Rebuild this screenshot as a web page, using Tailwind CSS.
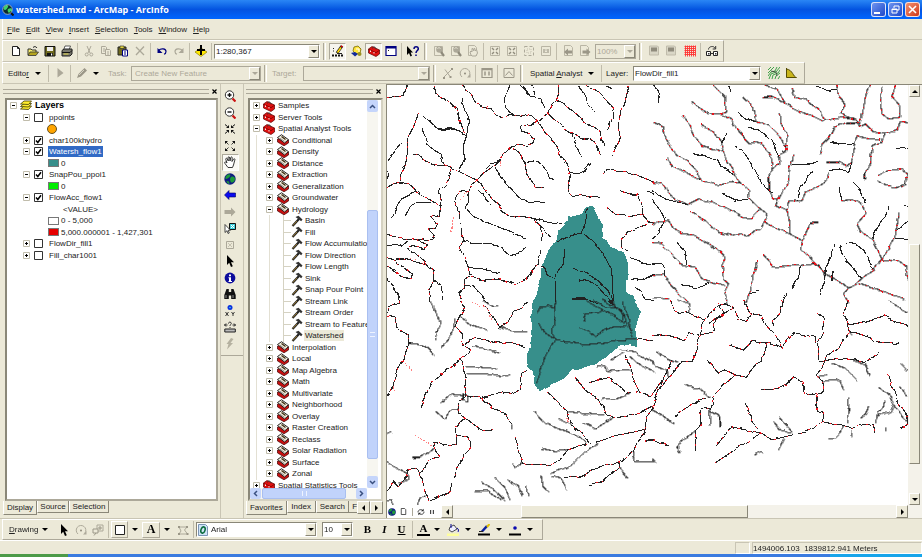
<!DOCTYPE html>
<html lang="en">
<head>
    <meta charset="UTF-8">
    <meta name="viewport" content="width=device-width, initial-scale=1.0">
    <title>watershed.mxd - ArcMap - ArcInfo</title>
    <script src="https://cdn.jsdelivr.net/npm/@tailwindcss/browser@4"></script>
</head>
<body class="h-screen flex flex-col overflow-hidden bg-[#ece9d8] font-['Liberation_Sans',sans-serif] text-[8px] leading-[11px] text-[#222]">

    <!-- Icon set, 12 x 12 grid -->
    <svg class="hidden">
        <symbol id="new" viewBox="0 0 12 12"><path d="M2.500 1.500h5l2 2v7h-7z" fill="#fff" stroke="#222"/><path d="M7.500 1.500v2h2" fill="none" stroke="#222"/></symbol>
        <symbol id="open" viewBox="0 0 12 12"><path d="M1 10V4h3l1 1h4v2" fill="#f5ec6a" stroke="#333"/><path d="M1 10.500 3 7h8.500L9 10.500z" fill="#b5a51d" stroke="#333" stroke-width=".8"/><path d="M6 2.500c1.500-1.500 3-1 4 .5" fill="none" stroke="#222"/></symbol>
        <symbol id="save" viewBox="0 0 12 12"><path d="M1 1.500h10V11H1z" fill="#6f6a1e" stroke="#111"/><path d="M3 2h6v4H3z" fill="#eee"/><path d="M3 8h6v3H3z" fill="#111"/><path d="M7 8.500h1.200v2H7z" fill="#fff"/></symbol>
        <symbol id="print" viewBox="0 0 12 12"><path d="M4 1h5.500L8 5H2.500z" fill="#fff" stroke="#333" stroke-width=".8"/><path d="M1 5.500 3 4h8v5l-2 2H1z" fill="#77766c" stroke="#222"/><path d="M1 7.500h8M9 7.500l2-2" stroke="#111"/><path d="M2.500 9h5" stroke="#e5d94a"/></symbol>
        <symbol id="cut" viewBox="0 0 12 12"><g fill="none" stroke="#aca899"><path d="M4 1l3 7M8 1 5 8"/><circle cx="3.700" cy="9.500" r="1.500"/><circle cx="8.300" cy="9.500" r="1.500"/></g></symbol>
        <symbol id="copy" viewBox="0 0 12 12"><g fill="#ece9d8" stroke="#aca899"><path d="M1.500 1.500h4l1 1v6h-5z"/><path d="M5.500 4.500h4l1 1v5h-5z"/><path d="M3 4h2M3 6h2M7 7h2M7 9h2"/></g></symbol>
        <symbol id="paste" viewBox="0 0 12 12"><path d="M1 2h8v8H1z" fill="#6f6a1e" stroke="#222"/><path d="M3 1h4v2.500H3z" fill="#ddd040" stroke="#222" stroke-width=".6"/><path d="M5.500 5h5v6h-5z" fill="#fff" stroke="#000080"/><path d="M7 7h2M7 9h2" stroke="#000080"/></symbol>
        <symbol id="del" viewBox="0 0 12 12"><path d="M2 2l8 8M10 1.500 2 10" stroke="#aca899" stroke-width="1.300"/></symbol>
        <symbol id="undo" viewBox="0 0 12 12"><path d="M2.500 5.500C5 3 10 3.500 10 6.500c0 1.500-1 2.500-2 2.800" fill="none" stroke="#000080" stroke-width="1.200"/><path d="M1.500 3v5h5z" fill="#000080"/></symbol>
        <symbol id="redo" viewBox="0 0 12 12"><path d="M9.500 5.500C7 3 2 3.500 2 6.500c0 1.500 1 2.500 2 2.800" fill="none" stroke="#aca899" stroke-width="1.200"/><path d="M10.500 3v5h-5z" fill="#aca899"/></symbol>
        <symbol id="adddata" viewBox="0 0 12 12"><path d="M0 7l6-4 6 4-6 4.500z" fill="#ffe800" stroke="#8a7b00" stroke-width=".7"/><path d="M6 0v10M2 5h8" stroke="#000" stroke-width="2"/></symbol>
        <symbol id="edit" viewBox="0 0 12 12"><path d="M1 3.500h1M1 6h1M5 8.500h5" stroke="#222"/><path d="M0 10.500h11" stroke="#111" stroke-width="2" stroke-dasharray="2 1"/><path d="M5 8l5-7" stroke="#222" stroke-width="3"/><path d="M5.500 7.500 9 2.500" stroke="#ffd800" stroke-width="1.600"/><path d="M9.300 2l.9-1.200" stroke="#d00" stroke-width="2"/></symbol>
        <symbol id="catalog" viewBox="0 0 12 12"><path d="M3 2l4-1 3 3-1 4-4 1-3-3z" fill="#ffe53a" stroke="#776a00" stroke-width=".8"/><path d="M5 4h3v3" fill="none" stroke="#fff"/><path d="M0 8l4-1 3 2-3 2.500z" fill="#112a9a"/><circle cx="8.500" cy="9" r="2" fill="#999020"/></symbol>
        <symbol id="toolbox" viewBox="0 0 12 12"><path d="M.5 4 4 1.500 11.500 5v4L8 11.500.5 8z" fill="#e01010" stroke="#5a0000" stroke-width=".7"/><path d="M.5 4.200 8 7.700l3.500-2.500" fill="none" stroke="#7a0000" stroke-width=".8"/><path d="M4.500 3.500c0-2.500 3.500-2 3.500.8" fill="none" stroke="#333" stroke-width=".8"/><path d="M2.500 5.500v1.500M6 7v1.500" stroke="#fff" stroke-width=".9"/></symbol>
        <symbol id="cmd" viewBox="0 0 12 12"><path d="M1 1.500h10v9H1z" fill="#fff" stroke="#000080" stroke-width="1.200"/><path d="M1 2.500h10" stroke="#000080" stroke-width="2"/><path d="M3 5.500h1" stroke="#222"/></symbol>
        <symbol id="help" viewBox="0 0 12 12"><path d="M0 1v9l2-2 1.500 3.500 1.500-.7L3.600 7.500H6z" fill="#000"/><path d="M7 4c0-3 4.300-2.700 4.300-.3C11.300 5.500 9 5.500 9 8M9 9.500v1.500" fill="none" stroke="#000080" stroke-width="1.500"/></symbol>
        <symbol id="pzin" viewBox="0 0 12 12"><path d="M1.500 1.500h8v9h-8z" fill="none" stroke="#b9b5a4"/><circle cx="6.500" cy="4.500" r="3.300" fill="#aca899"/><path d="M8 7l3 4" stroke="#8f8b7c" stroke-width="2.200"/><path d="M4.500 3.500c1-1 2-1 3 0" fill="none" stroke="#ece9d8"/></symbol>
        <symbol id="ppan" viewBox="0 0 12 12"><path d="M1.500.5h6l2 2v8h-8z" fill="none" stroke="#b9b5a4"/><path d="M4 10 3 7l1-1 1 1V3.500l1 .2.500 2 .5-2.200 1 .2V6l1.500-1.500L10.500 8 9 11H5z" fill="#ece9d8" stroke="#aca899"/></symbol>
        <symbol id="pfix" viewBox="0 0 12 12"><path d="M1.500 1.500h9v9h-9z" fill="none" stroke="#b9b5a4"/><path d="M3 3l2 2M9 3 7 5M3 9l2-2M9 9 7 7" stroke="#8f8b7c" stroke-width="1.400"/></symbol>
        <symbol id="pfull" viewBox="0 0 12 12"><path d="M1.500 1.500h9v9h-9z" fill="none" stroke="#aca899" stroke-dasharray="3 2"/><path d="M4 4h4v4H4z" fill="none" stroke="#c5c1b0" stroke-dasharray="1 1"/></symbol>
        <symbol id="p11" viewBox="0 0 12 12"><path d="M1.500 1.500h9v9h-9z" fill="none" stroke="#b9b5a4"/><path d="M4 4v4M8 4v4M6 4.500v1M6 7v1" stroke="#8f8b7c"/></symbol>
        <symbol id="pback" viewBox="0 0 12 12"><path d="M2.500.5h6l2 2v8h-8z" fill="none" stroke="#b9b5a4"/><path d="M2 7l4-3.500V5.500h4v3H6v2z" fill="#9b9788"/></symbol>
        <symbol id="pfwd" viewBox="0 0 12 12"><path d="M1.500.5h6l2 2v8h-8z" fill="none" stroke="#b9b5a4"/><path d="M11.500 7l-4-3.500V5.500h-4v3h4v2z" fill="#9b9788"/></symbol>
        <symbol id="draft" viewBox="0 0 12 12"><path d="M1.500 1h8l1 1v8h-9z" fill="#d9d6c6" stroke="#c0bcab"/><path d="M3 2.500h6v4H3z" fill="#8f8b7c"/></symbol>
        <symbol id="grid" viewBox="0 0 12 12"><path d="M1.500.5v11M3.500.5v11M5.500.5v11M7.500.5v11M9.500.5v11M11.500.5v11M.5 1.500h11M.5 3.500h11M.5 5.500h11M.5 7.500h11M.5 9.500h11" stroke="#f33" stroke-width=".9"/></symbol>
        <symbol id="link" viewBox="0 0 12 12"><path d="M.5 6.500h4v4h-4zM7.500 6.500h4v4h-4z" fill="#fff" stroke="#222"/><path d="M2 8h1.500v1.500H2zM9 8h1.500v1.500H9z" fill="#333"/><path d="M4.500 8.500h3" stroke="#333"/><path d="M2.500 4.500c0-3.500 6-4 6.500-1M9.700 1v3h-3" fill="none" stroke="#333"/></symbol>
        <symbol id="gptr" viewBox="0 0 12 12"><path d="M3.500 1v9.500L9.500 6z" fill="#aca899"/></symbol>
        <symbol id="gpen" viewBox="0 0 12 12"><path d="M1 11l1.500-4 6-6L11 3.500l-6 6z" fill="#9b9788"/><path d="M3 8l5-5" stroke="#d5d2c2"/></symbol>
        <symbol id="gline" viewBox="0 0 12 12"><path d="M1 11 11 1M3 2.500l5 7" stroke="#aca899"/><path d="M1 10h2v2H1zM9 1h2v2H9zM7.500 9h2v2h-2z" fill="#9b9788"/></symbol>
        <symbol id="grot" viewBox="0 0 12 12"><path d="M3 10A4.800 4.800 0 1 1 10 9" fill="none" stroke="#aca899"/><path d="M11.500 7v3.500H8z" fill="#aca899"/><circle cx="6" cy="6.500" r="1" fill="#8f8b7c"/></symbol>
        <symbol id="gtab" viewBox="0 0 12 12"><path d="M1 1.500h10v9H1z" fill="none" stroke="#9b9788" stroke-width="1.200"/><path d="M1 2.500h10M4 4.500v4M8 4.500v4" stroke="#9b9788" stroke-width="1.500"/></symbol>
        <symbol id="gsk" viewBox="0 0 12 12"><path d="M1 1.500h10v9H1z" fill="none" stroke="#9b9788"/><path d="M2.500 8.500 6 4.500l3.500 4" fill="none" stroke="#9b9788"/></symbol>
        <symbol id="contour" viewBox="0 0 12 12"><path d="M0 3 3 0M0 6 6 0M0 9l3-4 4-1 2-4M1 12l2-5 5-2 4-5M4 12l1-4 5-2 2-3M7 12l1-3 4-3M10 12l2-3" fill="none" stroke="#2d9a3a" stroke-width=".9"/><path d="M3 4l5 1 1 4" fill="none" stroke="#333" stroke-width=".7"/></symbol>
        <symbol id="hist" viewBox="0 0 12 12"><path d="M1.500 1v9.500h10C8 10 8 3 1.500 2z" fill="#c9b51c" stroke="#554c00"/></symbol>
        <symbol id="zin" viewBox="0 0 12 12"><circle cx="5.500" cy="5" r="4.200" fill="#fff" stroke="#333"/><path d="M5.500 3v4M3.500 5h4" stroke="#111" stroke-width="1.400"/><path d="M8.500 8.500l3 3" stroke="#c11" stroke-width="2.200"/></symbol>
        <symbol id="zout" viewBox="0 0 12 12"><circle cx="5.500" cy="5" r="4.200" fill="#fff" stroke="#333"/><path d="M3.500 5h4" stroke="#111" stroke-width="1.400"/><path d="M8.500 8.500l3 3" stroke="#c11" stroke-width="2.200"/></symbol>
        <symbol id="fin" viewBox="0 0 12 12"><path d="M1 1.500l2.500 2M11 1.500 8.500 3.500M1 10.500l2.500-2M11 10.500 8.500 8.500" stroke="#111"/><path d="M5 2v3H2zM7 2v3h3zM5 10V7H2zM7 10V7h3z" fill="#111"/></symbol>
        <symbol id="fout" viewBox="0 0 12 12"><path d="M4.500 4.500 2 2M7.500 4.500 10 2M4.500 7.500 2 10M7.500 7.500 10 10" stroke="#111" stroke-width=".8"/><path d="M1 1h3L1 4zM11 1H8l3 3zM1 11h3L1 8zM11 11H8l3-3z" fill="#111"/></symbol>
        <symbol id="pan" viewBox="0 0 12 12"><path d="M4 11.500 1 7.500C0 5.500 1.500 5.500 3 7L1.800 3.500C1.500 2 2.800 1.800 3.300 3l1 2-.3-3C4 .3 5.500.3 5.700 2l.3 3 .7-3.300c.4-1.400 1.700-1 1.500.4L8 5.500l1.500-2.300c.7-1 1.800-.3 1.300.9L9.500 9l-1 2.500z" fill="#fff" stroke="#222" stroke-width=".9"/></symbol>
        <symbol id="globe" viewBox="0 0 12 12"><circle cx="6" cy="6" r="5.700" fill="#101c80"/><path d="M3 2c3-2 4 0 3 1.500S3 6 2 6 1 4 3 2zM7 4c2-1 4 0 4 2s-2 4-3.500 3.500S5.500 5 7 4zM2.500 8l2.500.5.5 2.500c-1.500 0-3-1.500-3-3z" fill="#1d9a3a"/></symbol>
        <symbol id="app" viewBox="0 0 12 12"><circle cx="5.500" cy="5.500" r="5" fill="#0a2a30"/><path d="M2 3c2-3 5-2 4 0S4 6 3 6 1 5 2 3zM6 5c2-1 4-1 4 1S8 9.500 7 9 5 6 6 5z" fill="#3fd06a"/><path d="M8 8l3.500 3.500" stroke="#111" stroke-width="2"/><circle cx="5.500" cy="5.500" r="4.800" fill="none" stroke="#cde" stroke-width=".7"/></symbol>
        <symbol id="back" viewBox="0 0 12 12"><path d="M.5 6 5 1.500V4h6.500v4H5v2.500z" fill="#0a0af0" stroke="#000060" stroke-width=".6"/></symbol>
        <symbol id="fwd" viewBox="0 0 12 12"><path d="M11.500 6 7 1.500V4H.5v4H7v2.500z" fill="#aca899"/></symbol>
        <symbol id="self" viewBox="0 0 12 12"><path d="M5.500 1.500h6v6h-6z" fill="#3fd0dc" stroke="#111"/><path d="M7 3l3 3M10 3 7 6" stroke="#fff"/><path d="M1 2.500v8l2-1.800 1 2.800 1.300-.6-1.200-2.600h2.400z" fill="#fff" stroke="#222" stroke-width=".8"/></symbol>
        <symbol id="clrs" viewBox="0 0 12 12"><path d="M2.500 2.500h7v7h-7z" fill="#ece9d8" stroke="#aca899"/><path d="M4 4l4 4M8 4 4 8" stroke="#c5c1b0"/></symbol>
        <symbol id="ptr" viewBox="0 0 12 12"><path d="M3 0v10l2.200-2.200L7 12l1.800-.8L7 7.200h3z" fill="#000"/></symbol>
        <symbol id="info" viewBox="0 0 12 12"><circle cx="6" cy="6" r="5.400" fill="#0b0b9c"/><path d="M5 2.500h2v1.800H5zM4.500 5.200H7V9h1v1H4.500V9H5V6.200h-.5z" fill="#fff"/></symbol>
        <symbol id="find" viewBox="0 0 12 12"><path d="M2.500 1h2.300v3h2.400V1h2.300L11.700 7v4H7.200V7.500H4.800V11H.3V7z" fill="#111"/><path d="M2 7v3M9 7v3" stroke="#aaa" stroke-width=".8"/></symbol>
        <symbol id="xy" viewBox="0 0 12 12"><circle cx="6" cy="2.500" r="2.500" fill="#0a2fe0"/><circle cx="6" cy="2.500" r=".8" fill="#3fe0e0"/><path d="M1.500 7l3 4M4.500 7l-3 4M7.500 7 9 9v2M10.500 7 9 9" fill="none" stroke="#222" stroke-width=".9"/></symbol>
        <symbol id="meas" viewBox="0 0 12 12"><path d="M.8 8h10.500v3H.8z" fill="#bbb" stroke="#222"/><path d="M.5 4h3M8.500 4h3M2 2.500.5 4 2 5.500M10 2.500 11.500 4 10 5.500" fill="none" stroke="#222"/><path d="M4.500 2.500C4.500.5 7.500.8 7.300 2.600 7 3.600 6 3.500 6 5M6 6v1" fill="none" stroke="#222" stroke-width=".9"/></symbol>
        <symbol id="bolt" viewBox="0 0 12 12"><path d="M7 0 2.500 6h2L3 11.500 9 5H6.500L9.500 1z" fill="#b5b1a0"/></symbol>
        <symbol id="gzoom" viewBox="0 0 12 12"><path d="M5 1h6v6H5z" fill="none" stroke="#aca899"/><path d="M1 5h5v4H1zM7 3h2v2H7zM4 9l-2 2.500" fill="#ece9d8" stroke="#9b9788"/></symbol>
        <symbol id="rect" viewBox="0 0 12 12"><path d="M1.500 1.500h9v9h-9z" fill="#fff" stroke="#222"/></symbol>
        <symbol id="gpoly" viewBox="0 0 12 12"><path d="M2 3h8L7.500 6l3 4H2l2-3z" fill="none" stroke="#aca899"/><path d="M1 2h2v2H1zM9 2h2v2H9zM9.500 9h2v2h-2zM1 9h2v2H1z" fill="#9b9788"/></symbol>
        <symbol id="bucket" viewBox="0 0 12 12"><path d="M3 3l4-2 3 4-5 3-3-2z" fill="#eef" stroke="#222" stroke-width=".8"/><path d="M4 0v4M10 4c2 1 1.500 3 1 4" fill="none" stroke="#0b0b9c"/><path d="M0 9.500h12V12H0z" fill="#ffff9c"/></symbol>
        <symbol id="brush" viewBox="0 0 12 12"><path d="M4 7.500 9 2" stroke="#0b1f9c" stroke-width="2.500"/><path d="M9 3l2.500-3" stroke="#e0c000" stroke-width="2"/><path d="M1 7.500h4" stroke="#222"/><path d="M0 9.500h12v2H0z" fill="#000"/></symbol>
        <symbol id="dot" viewBox="0 0 12 12"><circle cx="6" cy="4" r="1.800" fill="#0a0ab0"/><path d="M0 9.500h12v2H0z" fill="#000"/></symbol>
        <symbol id="page" viewBox="0 0 12 12"><path d="M3 2h4.500L9 3.500V10H3z" fill="#fff" stroke="#222"/></symbol>
        <symbol id="refresh" viewBox="0 0 12 12"><path d="M1.500 6.500c0-4 4.500-5 7-3M10.500 5.500c0 4-4.500 5-7 3" fill="none" stroke="#222" stroke-width="1.300"/><path d="M10 1v4H6zM2 11V7h4z" fill="#222"/></symbol>
        <symbol id="pause" viewBox="0 0 12 12"><path d="M4 3v6M8 3v6" stroke="#222" stroke-width="1.500"/></symbol>
        <symbol id="layers" viewBox="0 0 12 12"><g fill="#ffee2e" stroke="#3c3800" stroke-width=".8"><path d="M.5 9 4 6h7.500L8.500 9.500z"/><path d="M.5 6.500 4 3.500h7.500L8.500 7z"/><path d="M.5 4 4 1h7.500L8.500 4.500z"/></g></symbol>
        <symbol id="toolset" viewBox="0 0 12 12"><path d="M.5 5v3L7 11.800 11.500 9V6z" fill="#c81010" stroke="#400" stroke-width=".7"/><path d="M.5 3.500 4.500.7l7 5L7.500 9z" fill="#f2ecdc" stroke="#111" stroke-width=".9"/><path d="M3 4.300l4.500 3" stroke="#777" stroke-width=".8"/><path d="M4.500 2.500 8.500 5.500" stroke="#3a2c10" stroke-width="1.300"/></symbol>
        <symbol id="hammer" viewBox="0 0 12 12"><path d="M1.500 11 8 4" stroke="#222" stroke-width="2.200"/><path d="M1.800 10.500 6 6" stroke="#b08a35" stroke-width=".8"/><path d="M4.500 2 7.500.8l4 3.700-1.300 1.700L7.500 4.200z" fill="#333"/></symbol>
        <symbol id="font" viewBox="0 0 12 12"><path d="M1.500.5h7l2 2v9h-9z" fill="#cfe4f7" stroke="#7a94b5"/><ellipse cx="6" cy="6" rx="2" ry="3.200" fill="none" stroke="#0a6b3c" stroke-width="1.500" transform="rotate(20 6 6)"/></symbol>
    </svg>

    <!-- Title bar -->
    <header class="h-[19px] shrink-0 flex items-center pl-[2px] pr-[2px] bg-linear-to-b from-[#2a86f5] via-[#0453e0] to-[#0066ff] text-white">
        <svg class="size-[12px] mr-[2px]"><use href="#app"/></svg>
        <h1 class="flex-1 font-['Open_Sans',sans-serif] font-bold text-[9px] leading-[14px]">watershed.mxd - ArcMap - ArcInfo</h1>
        <div class="flex gap-[2px]">
            <button aria-label="Minimize" class="size-[15px] rounded-[3px] border border-white/80 bg-linear-to-br from-[#6f94f0] to-[#1f45c8] flex items-end p-[2px]"><span class="w-[6px] h-[2px] bg-white"></span></button>
            <button aria-label="Restore" class="size-[15px] rounded-[3px] border border-white/80 bg-linear-to-br from-[#6f94f0] to-[#1f45c8] flex items-center justify-center"><svg class="size-[9px]" viewBox="0 0 9 9"><path d="M3 3V1h5v4H6M1 4h5v4H1zM1 4.500h5" fill="none" stroke="#fff"/></svg></button>
            <button aria-label="Close" class="size-[15px] rounded-[3px] border border-white/80 bg-linear-to-br from-[#f0906f] to-[#d0330f] flex items-center justify-center"><svg class="size-[9px]" viewBox="0 0 9 9"><path d="M1 1l7 7M8 1 1 8" stroke="#fff" stroke-width="1.600"/></svg></button>
        </div>
    </header>

    <!-- Menu bar -->
    <nav class="h-[21px] shrink-0 flex items-center gap-[6px] pl-[4px] ml-[2px] border-l border-b border-l-white border-b-[#c9c5b4]">
        <a href="#"><u>F</u>ile</a>
        <a href="#"><u>E</u>dit</a>
        <a href="#"><u>V</u>iew</a>
        <a href="#"><u>I</u>nsert</a>
        <a href="#"><u>S</u>election</a>
        <a href="#"><u>T</u>ools</a>
        <a href="#"><u>W</u>indow</a>
        <a href="#"><u>H</u>elp</a>
    </nav>

    <!-- Standard and layout toolbars -->
    <div class="h-[22px] shrink-0 flex">
        <div class="flex items-center pl-[4px] ml-[2px] pr-[3px] border border-t-white border-l-white border-b-[#c9c5b4] border-r-[#aca899]">
            <div class="flex" data-tools="new open save print | cut copy paste del | undo redo | adddata |"></div>
            <div class="w-[106px] h-[15px] flex border border-[#8a8778] border-r-white border-b-white bg-white">
                <input aria-label="Map scale" value="1:280,367" class="flex-1 min-w-0 px-px outline-none">
                <button aria-label="Scales" data-arrow></button>
            </div>
            <div class="flex" data-tools="|| edit* _ catalog toolbox* cmd | help || pzin pzin ppan | pfix pfix pfull p11 | pback pfwd _"></div>
            <div class="w-[41px] h-[15px] flex border border-[#aca899]">
                <select aria-label="Page zoom" disabled class="flex-1 min-w-0 appearance-none pl-px text-[#aca899]"><option>100%</option></select>
                <span data-arrow="off"></span>
            </div>
            <div class="flex" data-tools="|| draft draft _ grid | link"></div>
        </div>
    </div>

    <!-- Editor and Spatial Analyst toolbars -->
    <div class="h-[22px] shrink-0 flex">
        <div class="flex items-center pl-[5px] ml-[2px] pr-[3px] border border-t-white border-l-white border-b-[#c9c5b4] border-r-[#aca899]">
            <button class="w-[38px] flex items-center gap-[6px]"><span>Edito<u>r</u></span><i class="border-x-[3px] border-t-[3px] border-x-transparent border-t-black"></i></button>
            <div class="flex" data-tools="| gptr | gpen"></div>
            <i class="ml-[3px] mr-[9px] border-x-[3px] border-t-[3px] border-x-transparent border-t-black"></i>
            <label for="task" class="w-[23px] text-[#aca899]">Task:</label>
            <div class="w-[130px] h-[15px] flex border border-[#aca899]">
                <select id="task" disabled class="flex-1 min-w-0 appearance-none pl-[3px] text-[#aca899]"><option>Create New Feature</option></select>
                <span data-arrow="off"></span>
            </div>
            <div class="flex" data-tools="|| _"></div>
            <label for="target" class="w-[31px] text-[#aca899]">Target:</label>
            <div class="w-[127px] h-[15px] flex border border-[#aca899]">
                <select id="target" disabled class="flex-1 min-w-0 appearance-none pl-[3px]"></select>
                <span data-arrow="off"></span>
            </div>
            <div class="flex" data-tools="|| gline grot | gtab | gsk || _"></div>
            <button class="w-[71px] pl-[2px] flex items-center gap-[5px]"><span>Spatial <u>A</u>nalyst</span><i class="border-x-[3px] border-t-[3px] border-x-transparent border-t-black"></i></button>
            <div class="flex" data-tools="| _"></div>
            <label for="layer" class="w-[27px]">Layer:</label>
            <div class="w-[128px] h-[15px] flex border border-[#8a8778] border-r-white border-b-white bg-white">
                <select id="layer" class="flex-1 min-w-0 appearance-none pl-px"><option>FlowDir_fill1</option></select>
                <span data-arrow></span>
            </div>
            <div class="flex pl-[4px] pr-[2px]" data-tools="contour hist"></div>
        </div>
    </div>

    <main class="flex-1 min-h-0 flex">

        <!-- Table of contents -->
        <section class="w-[221px] shrink-0 flex flex-col border-r border-[#c9c5b4]">
            <div class="h-[14px] shrink-0 flex items-center pl-[3px] pr-px">
                <div class="flex-1 h-[5px] border-y border-[#aca899]"></div>
                <button aria-label="Close layers" class="w-[10px] flex justify-center"><svg class="size-[5px]" viewBox="0 0 5 5"><path d="M.5.5l4 4M4.500.5l-4 4" stroke="#000" stroke-width="1.200"/></svg></button>
            </div>
            <div class="flex-1 min-h-0 ml-[5px] mr-[2px] pl-[3px] border-2 border-t-[#8a8778] border-l-[#8a8778] border-b-[#aca899] border-r-[#aca899] bg-white overflow-hidden">
                <ul id="toc" class="h-[161px] grid auto-rows-fr"></ul>
            </div>
            <div class="h-[17px] shrink-0 flex items-start pl-[3px]">
                <button class="h-[14px] w-[34px] border border-t-0 border-[#8a8778] border-l-white">Display</button>
                <button class="h-[12px] w-[32px] border border-t-0 border-[#8a8778] border-l-white">Source</button>
                <button class="h-[12px] w-[40px] border border-t-0 border-[#8a8778] border-l-white">Selection</button>
            </div>
        </section>

        <!-- Tools palette -->
        <aside class="w-[23px] shrink-0 flex flex-col border-r border-[#c9c5b4]">
            <div id="palette" class="h-[272px] pt-[4px] pb-[3px] pr-[4px] grid auto-rows-fr justify-items-center border-b border-[#aca899]"></div>
        </aside>

        <!-- ArcToolbox -->
        <section class="w-[142px] shrink-0 flex flex-col">
            <div class="h-[14px] shrink-0 flex items-center pl-[2px] pr-[3px]">
                <div class="flex-1 h-[5px] border-y border-[#aca899]"></div>
                <button aria-label="Close toolbox" class="w-[10px] flex justify-center"><svg class="size-[5px]" viewBox="0 0 5 5"><path d="M.5.5l4 4M4.500.5l-4 4" stroke="#000" stroke-width="1.200"/></svg></button>
            </div>
            <div class="flex-1 min-h-0 ml-[4px] mr-[3px] flex flex-col border-2 border-t-[#8a8778] border-l-[#8a8778] border-b-[#d5d2c2] border-r-[#d5d2c2] bg-white">
                <div class="flex-1 min-h-0 flex">
                    <div class="flex-1 min-w-0 h-full overflow-hidden">
                        <ul id="toolboxes" class="h-[391px] grid auto-rows-fr"></ul>
                    </div>
                    <div class="w-[11px] mr-[3px] shrink-0 flex flex-col bg-[#f7f6f0]">
                        <button aria-label="Scroll up" class="h-[12px] rounded-[2px] bg-[#c5d5fb] flex items-center justify-center"><svg class="size-[7px]" viewBox="0 0 7 7"><path d="M1 5l2.500-2.500L6 5" fill="none" stroke="#3a5080" stroke-width="1.500"/></svg></button>
                        <div class="h-[98px]"></div>
                        <div class="h-[249px] rounded-[2px] bg-[#c1d3fb] border border-[#a9bff0] flex items-center justify-center"><span class="w-[5px] h-[5px] border-y border-[#eef3ff]"></span></div>
                        <button aria-label="Scroll down" class="mt-auto h-[12px] rounded-[2px] bg-[#c5d5fb] flex items-center justify-center"><svg class="size-[7px]" viewBox="0 0 7 7"><path d="M1 2l2.500 2.500L6 2" fill="none" stroke="#3a5080" stroke-width="1.500"/></svg></button>
                    </div>
                </div>
                <div class="h-[11px] shrink-0 flex mr-[14px] bg-[#f7f6f0]">
                    <button aria-label="Scroll left" class="w-[11px] rounded-[2px] bg-[#c5d5fb] flex items-center justify-center"><svg class="size-[7px]" viewBox="0 0 7 7"><path d="M5 1 2.500 3.500 5 6" fill="none" stroke="#3a5080" stroke-width="1.500"/></svg></button>
                    <div class="ml-px w-[84px] rounded-[2px] bg-[#c1d3fb] border border-[#a9bff0] flex items-center justify-center"><span class="w-[5px] h-[5px] border-x border-[#eef3ff]"></span></div>
                    <button aria-label="Scroll right" class="ml-auto w-[11px] rounded-[2px] bg-[#c5d5fb] flex items-center justify-center"><svg class="size-[7px]" viewBox="0 0 7 7"><path d="M2 1l2.500 2.500L2 6" fill="none" stroke="#3a5080" stroke-width="1.500"/></svg></button>
                </div>
            </div>
            <div class="h-[17px] shrink-0 flex items-start pl-[2px] pr-[3px]">
                <button class="h-[14px] w-[41px] border border-t-0 border-[#8a8778] border-l-white">Favorites</button>
                <button class="h-[12px] w-[29px] border border-t-0 border-[#8a8778] border-l-white">Index</button>
                <button class="h-[12px] w-[34px] border border-t-0 border-[#8a8778] border-l-white">Search</button>
                <button class="h-[12px] flex-1 text-left pl-[3px] border-b border-[#8a8778]">F</button>
                <button aria-label="Previous tabs" class="size-[13px] border border-white border-b-[#8a8778] border-r-[#8a8778] flex items-center justify-center"><i class="border-y-[3px] border-r-[3px] border-y-transparent border-r-black"></i></button>
                <button aria-label="Next tabs" class="size-[13px] border border-white border-b-[#8a8778] border-r-[#8a8778] flex items-center justify-center"><i class="border-y-[3px] border-l-[3px] border-y-transparent border-l-black"></i></button>
            </div>
        </section>

        <!-- Map -->
        <section class="flex-1 min-w-0 flex flex-col border-t border-l border-[#8a8778]">
            <div class="flex-1 min-h-0 flex">
                <div class="flex-1 min-w-0 bg-white">
                    <svg class="w-full h-full" viewBox="387 85 521 420" preserveAspectRatio="xMinYMin slice" fill="none">
                        <defs>
                            <filter id="rough" filterUnits="userSpaceOnUse" x="380" y="80" width="540" height="430" color-interpolation-filters="sRGB">
                                <feTurbulence type="fractalNoise" baseFrequency=".11" numOctaves="1" seed="7" result="n"/>
                                <feDisplacementMap in="SourceGraphic" in2="n" scale="5" xChannelSelector="R" yChannelSelector="G"/>
                            </filter>
                        </defs>
                        <g filter="url(#rough)" stroke-linejoin="round" shape-rendering="crispEdges">
                            <path transform="translate(385 84) scale(.3333)" fill="#378f8b" d="M612 362 625 365 632 380 638 400 650 420 655 460 675 485 720 510 733 550 722 600 725 630 745 640 757 657 770 686 760 703 750 738 757 768 757 790 730 783 705 780 690 798 650 828 590 856 555 860 530 886 500 900 480 910 465 925 447 898 445 863 430 848 422 823 435 788 440 758 438 728 442 657 455 630 465 600 470 550 480 525 490 500 515 465 520 440 548 415 550 400 575 395 590 390 605 368z"/>
                            <g id="main" stroke="#222" stroke-width="3.200">
                                <g transform="translate(385 84) scale(.3333)">
                                    <path d="M3 45 25 38 45 33 60 20 70 5M148 5 152 28 175 42 190 55 212 72 222 100 238 148M232 3 245 22 262 35 268 55 285 68 320 75 350 102 363 98 372 92 400 95 420 92 438 98 455 108 462 118"/>
                                    <path d="M520 3 522 22 515 48 492 75 488 88 460 110 440 120 412 125 405 132 412 145 435 150 448 165 443 180 425 188 405 180 380 185 358 210 340 235 310 255 285 280 275 288 240 272 222 262 200 250 178 243 160 245 130 235 100 212 80 210"/>
                                    <path d="M100 90 85 130 68 160 68 200 62 240 48 270 46 292M3 312 25 300 45 294 70 300 95 325 120 340 140 348 165 365M200 255 192 285 180 305 160 312 163 335 168 365 162 395 140 400 158 420 152 432 130 435 148 455 140 466 112 465 98 470 65 465 30 458 3 450"/>
                                    <path d="M98 470 128 482 120 495 85 485 72 490 80 505 110 520 120 538 90 535 60 525 35 525 32 540 60 550 80 570 75 582 50 575 20 555 3 545M3 520 30 530M120 538 145 560 150 590 135 615 132 657"/>
                                    <path d="M275 290 262 300 252 318 222 322 210 340 218 375 222 405 230 440 232 470 226 490 240 520 250 550 256 575 240 585 238 610 222 630 228 657M256 580 290 590 330 585 360 590 393 602 425 585 440 560 460 540M275 288 300 315 325 350 370 395 410 397 445 403 465 425 470 450"/>
                                    <path d="M460 118 480 145 515 185 528 215 545 245 555 280 550 325 560 335 600 335 620 342 645 340M515 48 545 65 580 95 610 120 645 145 658 190M488 88 520 118 560 145 590 165 615 165 635 180 646 212M605 3 640 25 665 50 685 75 680 110 668 138M732 5 722 45 708 75 700 130 706 165 690 195 682 215"/>
                                    <path d="M380 190 405 210 420 235 425 270 450 310 478 312M658 268 665 255 690 262 720 262 760 275 808 295M665 370 690 390 740 395 775 395 798 418M775 395 770 360 760 330 735 330 708 320M808 420 798 418 760 430 730 445 712 460 712 490 728 505"/>
                                </g>
                                <g transform="translate(652 84) scale(.3333)">
                                    <path d="M180 3 200 20 222 40 220 85 205 90 170 90 140 70 115 52M205 88 240 110 260 145 290 175 330 180 355 210 362 240 352 275 352 315 362 345 380 345M90 95 115 125 130 160 150 185 190 195 215 205M148 122 185 145 205 175 215 205 225 235 245 265 270 300 290 320 292 345 325 375 348 390 337 412"/>
                                    <path d="M5 115 35 130 42 165 75 215 105 230 135 265 150 290 195 305 240 295 270 298M40 222 60 245 100 265 145 285M0 295 30 300 50 330 75 348 105 362 140 345 180 355 230 375 270 400 300 402 322 378M118 385 160 410 200 445 240 455 265 445 287 460 310 442 325 440 337 412"/>
                                    <path d="M337 412 375 435 415 450 450 472 450 495 470 515 490 540 520 570 560 590 590 612 575 630 590 657M340 5 375 15 400 58 440 80 480 95 510 110 580 100 615 105 622 130 640 120 660 140 700 148M420 12 430 40 470 50 500 75 518 105M555 3 560 40 580 60 565 90 590 100 615 105M655 3 640 40 632 90 620 130"/>
                                    <path d="M700 148 735 140 745 115 768 120M700 148 690 175 660 185 655 240 640 265 640 290M620 115 585 115 545 130 530 160 510 180 502 212M688 165 650 165 615 155 605 190 600 235 585 245 560 235 522 235M330 40 360 40 400 58M385 92 388 120 405 150 405 200 378 215 385 240 355 262M270 38 300 65 312 110 350 125 380 155 405 190"/>
                                    <path d="M422 212 412 260 410 290 380 345 370 362 405 378 412 410 415 450M405 378 410 352 450 350 460 325 500 305 528 285 530 265M0 425 20 410 50 410 65 435 90 450 120 452 180 485 220 520 210 545 215 585 230 600 215 630 228 657M0 475 30 480 60 510 85 540 130 550 150 585 175 592 220 605"/>
                                    <path d="M333 510 360 545 440 545 490 540 505 550 520 580M568 350 600 348 630 358 640 390 615 420 625 440 660 470 690 525 665 560 640 575 610 600 590 612M690 525 710 490 730 455 742 385M690 528 740 530 760 545 768 590M620 600 650 610 700 625 760 645M450 472 465 440 475 418 498 418"/>
                                    <path d="M678 275 710 258 750 258 768 270 760 300 730 312 700 305 675 290M730 3 720 40 745 70 742 100 710 105 690 90 685 50 692 3M0 575 35 570 60 605 110 657M0 640 50 645M315 528 305 570 295 620 282 657"/>
                                </g>
                                <g transform="translate(385 300) scale(.3333)">
                                    <path d="M45 5 10 20 5 45 30 50 35 85 70 105 72 130 60 165 35 210 25 260 3 288M228 5 240 20 225 50 210 80 232 105 232 135 255 150 230 175 240 230 242 290 220 305 222 340 240 355 215 380 215 410 245 410 258 440 235 465 205 535M232 135 270 112 300 120 325 130 370 125 420 140"/>
                                    <path d="M295 15 315 40 345 82 370 65 385 35 410 25 428 5M228 178 185 210 140 245 125 280 105 320M242 285 290 295 340 277 380 283 403 270 410 220 425 212M290 295 320 325 355 335 380 375M390 410 400 440 415 492 450 495 500 493 525 480 548 450 600 432 640 425 700 405 740 398 780 388"/>
                                    <path d="M485 278 525 310 548 340 560 375 590 400 612 425M570 230 600 270 640 300 668 345 700 352 750 345 808 315M215 410 215 432 175 435 150 425 145 445 165 470 130 485 105 520 118 575 135 605 195 572 200 550M105 520 95 502 70 505 65 530 40 560 25 545 5 575M240 355 265 375 290 390 325 388"/>
                                    <path d="M715 158 735 200 745 240 765 275 720 280 705 260 670 232 612 248M765 275 795 290 808 280M808 320 785 350 780 400 755 430 745 455 710 485 660 495 620 510 580 530 540 530M700 480 705 505 670 525 650 545 615 557M755 118 808 122M808 420 780 420"/>
                                </g>
                                <g transform="translate(652 300) scale(.3333)">
                                    <path d="M55 0 70 35 115 40 160 60 190 20 228 10 240 25 190 60 185 95 145 105 135 140 120 185 90 185 50 235 20 270 0 325M0 105 55 108 98 122 110 98 140 105 160 60M275 0 295 40 280 65 260 55 240 20M200 10 215 40 170 70M295 40 330 50 345 80 368 100 390 145M390 0 385 35 365 60 368 100"/>
                                    <path d="M390 145 425 98 490 112 500 145 500 180 518 182M495 40 518 55 515 95 500 125M590 0 575 40 590 75 590 100 560 140 525 165 510 200 495 225 512 240 512 275 480 285 460 280 455 250 425 230 400 255 375 270 325 268M590 75 640 65 695 48 768 80M518 182 560 175 600 178 640 188 680 155M590 95 620 100 655 115 665 125 740 130"/>
                                    <path d="M390 145 350 130 300 125 275 150 228 135M345 132 330 185 310 195 280 232 250 225 220 210 200 220 165 180M250 225 215 255 182 290 175 325 148 325 145 375 130 395 132 455M182 290 140 300 100 325 68 350M495 285 495 335 512 340 512 362 480 385 440 400 400 410 360 420 330 400 300 365 298 345 275 308"/>
                                    <path d="M512 362 570 375 600 385 645 370 665 375 668 398M330 400 235 380 215 410 192 438M325 400 280 430 240 455 190 488M710 225 735 300 768 350 765 375 745 382M0 420 20 430 55 433M20 270 60 180M0 285 30 240"/>
                                </g>
                            </g>
                            <g stroke="#222" stroke-width="3.200">
                                <g transform="translate(385 84) scale(.3333)">
                                    <path d="M235 35 230 60 248 90 250 120 245 155 235 185 238 225 222 262M115 97 140 120 160 135 210 135 232 150 245 155M115 133 125 180 150 200 168 210 175 240M47 178 25 205 3 235M375 3 358 45 358 70 375 85 390 95M405 3 440 35 465 45 480 70M440 5 450 30M560 148 570 175 587 215M580 3 600 35 610 60 630 82M618 238 600 260 580 270 552 265"/>
                                    <path d="M425 235 455 230 480 250 495 278 508 285M330 250 350 280 375 310 410 350 480 355M250 318 245 375 270 400 330 425 380 445 418 462M232 470 260 478 330 480 375 515 410 505 425 488M250 550 290 555 345 567M278 322 295 330 300 350 318 365M105 322 80 330 50 345 35 370 18 402M140 355 100 355 75 370 60 397M445 403 490 415 530 422M460 425 480 440 497 460"/>
                                    <path d="M470 450 465 475M470 498 462 525 460 545M3 485 45 485 65 468M150 590 170 605 172 650M240 600 265 605 285 630 308 657M785 320 808 335M738 520 770 540 808 538M738 585 770 590 808 570M750 610 770 625 780 645 808 650M3 570 10 590 35 625 45 657M665 3 682 12M3 262 10 268 3 285M300 255 315 240 345 228"/>
                                    <path d="M607 372 602 410 592 445 550 458 515 475M592 445 625 475 655 515 680 555 683 600 683 655M540 495 535 540 518 565 512 583 490 570 470 550M512 583 512 657M560 555 600 565 640 590 670 620 683 655M580 588 610 590 640 610 685 660M560 645 600 645 640 660"/>
                                </g>
                                <g transform="translate(652 84) scale(.3333)">
                                    <path d="M5 3 20 25 22 57M230 3 237 25M225 148 205 178M125 208 160 220 195 225 210 250 245 272M248 185 275 205 300 240 330 300 362 330M292 133 320 135 360 170 380 215M255 82 280 105 312 112M215 330 250 348 292 345M420 242 470 240 500 232M480 262 460 290 440 320 435 350M535 175 560 180 605 178M548 480 530 530 505 632"/>
                                    <path d="M562 485 580 530 610 560 628 582M573 475 610 478 640 500 665 560M605 295 625 320 640 355M565 310 568 350M710 362 700 400 670 440 660 468M770 412 735 440M730 462 768 467M730 195 750 190 768 197M530 260 560 255 590 262 600 235M445 548 440 580 422 615M0 320 40 345 105 362M0 345 20 370 38 405 20 450 0 465"/>
                                    <path d="M85 602 130 615 170 595M75 475 95 500 105 540M405 628 390 657M495 3 525 20 555 15M540 560 540 590M292 628 322 622M0 540 30 540 40 560 35 572M756 368 768 368"/>
                                </g>
                                <g transform="translate(385 300) scale(.3333)">
                                    <path d="M512 0 508 60 502 100 510 118 545 125 600 135 650 128 700 120 755 115M510 118 480 170 465 220 455 250M460 68 475 95 505 115M455 40 465 22 490 18 508 25M625 0 660 20 700 25 720 50 725 75M600 2 640 22 680 45 720 70M585 85 610 95 630 110 660 90 690 80 725 78M595 60 600 40 640 35 652 30M655 0 690 20 710 30 715 60M715 0 720 30 735 60 730 80 745 112M683 0 695 28"/>
                                    <path d="M140 0 150 30 165 70 148 125M225 50 260 75 308 90M345 82 380 95 425 95M210 55 205 95 180 125 172 145M72 130 115 135 148 167M258 140 300 145 342 158M240 200 290 202 338 207M245 222 300 222 350 230 372 225M230 290 200 285 170 305M150 335 180 360 200 330 220 328M450 335 480 370 530 390 575 405 605 428M520 355 560 375M548 335 600 342 660 345"/>
                                    <path d="M595 367 635 385 685 350M650 298 700 295 740 280M635 197 660 200 670 215 732 208M680 180 715 158M700 147 750 155 808 190M735 170 770 200 808 215M470 445 510 455 548 450M640 430 600 455 560 495 495 522M288 545 330 570 360 603M272 573 310 573 350 600M330 535 358 560 375 600M368 540 400 560 412 592M425 552 428 590M468 525 475 560 492 580M500 530 530 537 545 570"/>
                                    <path d="M705 505 728 535M745 455 750 485 808 485M380 490 385 500 415 492M380 375 382 388M78 472 110 472 145 445M3 402 18 395M3 487 40 505 65 520 70 540 40 550M3 598 20 600 28 615M97 615 105 595 118 585M295 0 315 15 342 18M232 285 248 285 248 302 232 300z"/>
                                </g>
                                <g transform="translate(652 300) scale(.3333)">
                                    <path d="M12 152 50 180 80 190M0 190 45 210 50 235M98 258 140 265 175 290M175 325 172 375M175 335 205 350 205 382M130 395 90 420 75 445 85 460M365 365 385 390 420 400M380 350 400 375 425 395M380 450 395 415M308 465 325 455 335 458M590 295 588 370M625 355 640 345 650 315M670 370 675 345 695 320 698 300M675 348 715 335 725 315"/>
                                    <path d="M540 190 580 205 620 245M600 180 640 195 655 225M510 245 550 238 565 245 575 270M675 258 710 285 730 320 765 365M705 0 768 38M745 190 768 212M745 258 765 290M0 330 30 345 65 372M575 375 565 400 550 415 530 418M600 390 598 412M700 380 698 392M0 480 15 488M590 95 600 105M80 0 110 15 115 40M500 230 525 225"/>
                                </g>
                            </g>
                            <!-- High accumulation cells show through as red dashes -->
                            <g id="cells"></g>
                            <g stroke="#ff8080" stroke-width="3.200" stroke-dasharray="4 5">
                                <path transform="translate(385 300) scale(.3333)" d="M58 190 82 212M25 262 32 285M260 8 300 20 320 60M90 408 120 420 140 438M545 335 552 370"/>
                                <path transform="translate(385 84) scale(.3333)" d="M245 320 230 345M205 400 200 440M348 235 345 250M75 527 100 530"/>
                            </g>
                        </g>
                    </svg>
                </div>
                <div class="w-[14px] shrink-0 flex flex-col pl-px pr-[2px] bg-[#f4f2ea]">
                    <button aria-label="Scroll up" class="h-[12px] bg-[#ece9d8] border border-white border-b-[#8a8778] border-r-[#8a8778] flex items-center justify-center"><i class="border-x-[3px] border-b-[3px] border-x-transparent border-b-black"></i></button>
                    <div class="h-[147px]"></div>
                    <div class="h-[220px] bg-[#ece9d8] border border-white border-b-[#8a8778] border-r-[#8a8778]"></div>
                    <button aria-label="Scroll down" class="mt-auto h-[12px] bg-[#ece9d8] border border-white border-b-[#8a8778] border-r-[#8a8778] flex items-center justify-center"><i class="border-x-[3px] border-t-[3px] border-x-transparent border-t-black"></i></button>
                </div>
            </div>
            <div class="h-[13px] shrink-0 flex pr-[14px] bg-[#f4f2ea]">
                <div class="w-[54px] pl-px flex items-center gap-[3px] bg-white">
                    <svg class="size-[8px]"><use href="#globe"/></svg>
                    <svg class="size-[9px]"><use href="#page"/></svg>
                    <span class="w-px h-[8px] mx-px bg-[#aca899]"></span>
                    <svg class="size-[8px]"><use href="#refresh"/></svg>
                    <svg class="size-[8px]"><use href="#pause"/></svg>
                </div>
                <button aria-label="Scroll left" class="w-[12px] bg-[#ece9d8] border border-white border-b-[#8a8778] border-r-[#8a8778] flex items-center justify-center"><i class="border-y-[3px] border-r-[3px] border-y-transparent border-r-black"></i></button>
                <div class="w-[68px]"></div>
                <div class="w-[227px] bg-[#ece9d8] border border-white border-b-[#8a8778] border-r-[#8a8778]"></div>
                <button aria-label="Scroll right" class="ml-auto w-[12px] bg-[#ece9d8] border border-white border-b-[#8a8778] border-r-[#8a8778] flex items-center justify-center"><i class="border-y-[3px] border-l-[3px] border-y-transparent border-l-black"></i></button>
            </div>
        </section>
    </main>

    <!-- Drawing toolbar -->
    <div class="h-[22px] shrink-0 flex border-t border-[#c9c5b4]">
        <div class="flex items-center pl-[6px] ml-[2px] pr-[5px] border border-t-white border-l-white border-b-[#aca899] border-r-[#aca899]">
            <button class="w-[46px] flex items-center gap-[4px]"><span><u>D</u>rawing</span><i class="border-x-[3px] border-t-[3px] border-x-transparent border-t-black"></i></button>
            <div class="flex" data-tools="ptr grot gzoom |"></div>
            <div class="flex" data-tools="rect+"></div>
            <i class="mx-[4px] border-x-[3px] border-t-[3px] border-x-transparent border-t-black"></i>
            <button aria-label="Text" class="w-[18px] h-[16px] border border-white border-b-[#aca899] border-r-[#aca899] font-['Liberation_Serif',serif] font-bold text-[12px] text-black">A</button>
            <i class="mx-[4px] border-x-[3px] border-t-[3px] border-x-transparent border-t-black"></i>
            <div class="flex" data-tools="gpoly |"></div>
            <div class="w-[121px] h-[15px] flex items-center border border-[#8a8778] border-r-white border-b-white bg-white">
                <svg class="size-[12px] mr-[2px]"><use href="#font"/></svg>
                <select aria-label="Font" class="flex-1 min-w-0 appearance-none"><option>Arial</option></select>
                <span data-arrow></span>
            </div>
            <div class="w-[31px] ml-[5px] mr-[6px] h-[15px] flex border border-[#8a8778] border-r-white border-b-white bg-white">
                <select aria-label="Font size" class="flex-1 min-w-0 appearance-none pl-px"><option>10</option></select>
                <span data-arrow></span>
            </div>
            <button class="w-[17px] font-['Liberation_Serif',serif] font-bold text-[11px] text-black">B</button>
            <button class="w-[17px] font-['Liberation_Serif',serif] font-bold italic text-[11px] text-black">I</button>
            <button class="w-[17px] font-['Liberation_Serif',serif] font-bold underline text-[11px] text-black">U</button>
            <div class="flex" data-tools="| _"></div>
            <button aria-label="Font color" class="w-[13px] h-[13px] border-b-2 border-black font-['Liberation_Serif',serif] font-bold text-[11px] text-black">A</button>
            <i class="mx-[4px] border-x-[3px] border-t-[3px] border-x-transparent border-t-black"></i>
            <div class="flex" data-tools="bucket"></div>
            <i class="mx-[4px] border-x-[3px] border-t-[3px] border-x-transparent border-t-black"></i>
            <div class="flex" data-tools="brush"></div>
            <i class="mx-[4px] border-x-[3px] border-t-[3px] border-x-transparent border-t-black"></i>
            <div class="flex" data-tools="dot"></div>
            <i class="mx-[4px] border-x-[3px] border-t-[3px] border-x-transparent border-t-black"></i>
        </div>
    </div>

    <!-- Status bar -->
    <footer class="h-[14px] shrink-0 flex justify-end items-end gap-[2px] border-t border-white">
        <div class="w-[15px] h-[12px] border border-[#c9c5b4] border-b-white border-r-white"></div>
        <div class="w-[170px] h-[12px] border border-[#c9c5b4] border-b-white border-r-white whitespace-pre">1494006.103  1839812.941 Meters</div>
    </footer>
    <div class="h-[3px] shrink-0 flex bg-[#3a7be0]">
        <div class="w-[68px] bg-[#4c9a48]"></div>
        <div class="ml-auto w-[92px] bg-[#16a5ea]"></div>
    </div>

    <script>
        const icon = name => `<svg class="size-[12px]"><use href="#${name}"/></svg>`

        // Toolbars: "|" thin divider, "||" divider with a grip, "_" gap, "*" pressed, "+" raised
        document.querySelectorAll('[data-tools]').forEach(el => {
            el.innerHTML = el.dataset.tools.split(' ').map(t => {
                if (t === '|') return '<span class="w-[5px] h-[17px] flex justify-center"><span class="w-px bg-[#c0bcab]"></span></span>'
                if (t === '||') return '<span class="w-[9px] h-[17px] flex justify-center gap-px"><span class="w-px bg-[#aca899]"></span><span class="w-px bg-white"></span></span>'
                if (t === '_') return '<span class="w-[2px]"></span>'
                const name = t.replace(/[*+]/, '')
                let look = 'w-[17px] h-[17px] flex items-center justify-center'
                if (t.endsWith('*')) look += ' bg-[#f6f5ee] border border-[#aca899] border-b-white border-r-white'
                if (t.endsWith('+')) look += ' border border-white border-b-[#aca899] border-r-[#aca899]'
                return `<button aria-label="${name}" class="${look}">${icon(name)}</button>`
            }).join('')
        })

        // Drop-down arrows
        document.querySelectorAll('[data-arrow]').forEach(el => {
            el.className = 'w-[11px] shrink-0 self-stretch bg-[#ece9d8] border border-white border-b-[#8a8778] border-r-[#8a8778] flex items-center justify-center'
            el.innerHTML = el.dataset.arrow === 'off'
                ? '<i class="border-x-[3px] border-t-[3px] border-x-transparent border-t-[#aca899]"></i>'
                : '<i class="border-x-[3px] border-t-[3px] border-x-transparent border-t-black"></i>'
        })

        // Tools palette
        const palette = ['zin', 'zout', 'fin', 'fout', 'pan', 'globe', 'back', 'fwd', 'self', 'clrs', 'ptr', 'info', 'find', 'xy', 'meas', 'bolt']
        document.getElementById('palette').innerHTML = palette.map(name =>
            `<button aria-label="${name}" class="w-[17px] flex items-center justify-center ${name === 'pan' ? 'bg-[#fbfaf5] border border-[#aca899] border-b-white border-r-white' : ''}">${icon(name)}</button>`
        ).join('')

        const box = open => `<svg class="size-[7px] shrink-0" viewBox="0 0 7 7"><path d="M.5.5h6v6h-6z" fill="#fff" stroke="#c0bcab"/><path d="${open ? 'M2 3.500h3' : 'M2 3.500h3M3.500 2v3'}" stroke="#000"/></svg>`

        // Table of contents
        const layers = [
            { name: 'ppoints', open: true, on: false, items: [['dot', '']] },
            { name: 'char100khydro', open: false, on: true, items: [] },
            { name: 'Watersh_flow1', open: true, on: true, selected: true, items: [['bg-[#378f8b]', '0']] },
            { name: 'SnapPou_ppoi1', open: true, on: true, items: [['bg-[#00ee00]', '0']] },
            { name: 'FlowAcc_flow1', open: true, on: true, items: [['', '&lt;VALUE&gt;'], ['bg-white', '0 - 5,000'], ['bg-[#e60000]', '5,000.000001 - 1,427,301']] },
            { name: 'FlowDir_fill1', open: false, on: false, items: [] },
            { name: 'Fill_char1001', open: false, on: false, items: [] }
        ]
        const swatch = ([fill, text]) => {
            if (fill === 'dot') return '<li class="flex items-center pl-[37px]"><span class="size-[10px] rounded-full bg-[#ffa500] border border-[#665020]"></span></li>'
            if (!fill) return `<li class="flex items-center pl-[53px]">${text}</li>`
            return `<li class="flex items-center gap-[2px] pl-[38px]"><span class="w-[11px] h-[8px] border border-[#777] ${fill}"></span>${text}</li>`
        }
        document.getElementById('toc').innerHTML =
            `<li class="flex items-center gap-[3px] font-bold text-[9px] text-black">${box(true)}${icon('layers')}Layers</li>` +
            layers.map((l, i) => `<li class="flex items-center pl-[13px]">${box(l.open)}
                <input type="checkbox" id="layer${i}" ${l.on ? 'checked' : ''} class="peer sr-only">
                <label for="layer${i}" class="flex items-center"><svg class="size-[9px] ml-[4px] mr-[5px]" viewBox="0 0 9 9"><path d="M.5.5h8v8h-8z" fill="#fff" stroke="#333"/>${l.on ? '<path d="M2 4.500 3.800 6.500 7 2.200" fill="none" stroke="#000" stroke-width="1.500"/>' : ''}</svg>
                <span class="px-px ${l.selected ? 'bg-[#316ac5] text-white' : ''}">${l.name}</span></label></li>` + l.items.map(swatch).join('')).join('')

        // ArcToolbox tree
        const tools = ['Basin', 'Fill', 'Flow Accumulation', 'Flow Direction', 'Flow Length', 'Sink', 'Snap Pour Point', 'Stream Link', 'Stream Order', 'Stream to Feature', 'Watershed']
        const sets = ['Conditional', 'Density', 'Distance', 'Extraction', 'Generalization', 'Groundwater', 'Hydrology', 'Interpolation', 'Local', 'Map Algebra', 'Math', 'Multivariate', 'Neighborhood', 'Overlay', 'Raster Creation', 'Reclass', 'Solar Radiation', 'Surface', 'Zonal']
        const toolboxRow = (name, open) => `<li class="flex items-center pl-[3px] whitespace-nowrap">${box(open)}<svg class="size-[12px] ml-[3px] mr-[3px] shrink-0"><use href="#toolbox"/></svg>${name}</li>`
        const toolRow = name => `<li class="flex items-center pl-[6px] whitespace-nowrap"><span class="w-px self-stretch bg-[#e3e0d3]"></span><span class="w-px self-stretch ml-[12px] bg-[#e3e0d3]"></span><span class="w-px self-stretch ml-[13px] bg-[#d5d2c2]"></span><span class="w-[7px] h-px bg-[#d5d2c2]"></span><svg class="size-[12px] mr-px shrink-0"><use href="#hammer"/></svg><span class="px-px ${name === 'Watershed' ? 'bg-[#ece9d8]' : ''}">${name}</span></li>`
        const setRow = name => `<li class="flex items-center pl-[6px] whitespace-nowrap"><span class="w-px self-stretch mr-[9px] bg-[#e3e0d3]"></span>${box(name === 'Hydrology')}<svg class="size-[12px] ml-[4px] mr-[3px] shrink-0"><use href="#toolset"/></svg>${name}</li>` +
            (name === 'Hydrology' ? tools.map(toolRow).join('') : '')
        document.getElementById('toolboxes').innerHTML =
            toolboxRow('Samples', false) + toolboxRow('Server Tools', false) + toolboxRow('Spatial Analyst Tools', true) +
            sets.map(setRow).join('') + toolboxRow('Spatial Statistics Tools', false)

        // Red cells reuse the main streams with their own stroke
        const cells = document.getElementById('main').cloneNode(true)
        cells.id = 'cells'
        cells.setAttribute('stroke', '#e8131c')
        cells.setAttribute('stroke-dasharray', '5 19 3 11 6 24')
        document.getElementById('cells').replaceWith(cells)
    </script>
</body>
</html>
